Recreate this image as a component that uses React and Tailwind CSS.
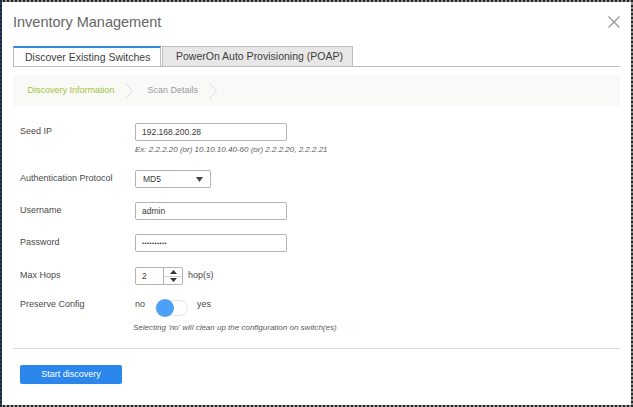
import React from 'react';

const FONT = { fontFamily: '"Liberation Sans", Arial, sans-serif' };

function Chevron() {
  return (
    <svg width="8" height="16" viewBox="0 0 8 16" className="shrink-0">
      <path d="M0.5 0.5 L7.5 8 L0.5 15.5" fill="none" stroke="#dcdcdc" strokeWidth="1" />
    </svg>
  );
}

function Row({ label, className = '', children }) {
  return (
    <div className={`flex items-center h-[18px] pl-[7px] ${className}`}>
      <div className="w-[115px] text-[9px] text-[#4a4a4a]">{label}</div>
      {children}
    </div>
  );
}

function TextBox({ children }) {
  return (
    <div className="w-[152px] h-[18px] flex items-center px-[6px] border border-[#b3b3b3] rounded-[2px] bg-white text-[8.5px] text-[#3a3a3a]">
      {children}
    </div>
  );
}

export default function App() {
  return (
    <div className="w-[633px] h-[407px] bg-[linear-gradient(to_right,#1d3f7a_2px,#8f8f8f_2px)]" style={FONT}>
      <div className="w-full h-full border-2 border-dotted border-[#262626] bg-white bg-clip-padding px-[11px]">
        {/* header */}
        <div className="flex justify-between items-start pt-[12px]">
          <div className="text-[14.5px] leading-[17px] text-[#666]">Inventory Management</div>
          <svg width="12" height="12" viewBox="0 0 12 12" className="mt-[2px]">
            <path d="M0.5 0.5 L11.5 11.5 M11.5 0.5 L0.5 11.5" stroke="#9a9a9a" strokeWidth="1.4" />
          </svg>
        </div>

        {/* tabs */}
        <div className="flex mt-[15px] border-b border-[#bdbdbd] h-[21px]">
          <div className="w-[148px] h-[20px] border-t-2 border-t-[#2f8ae0] border-x border-x-[#bdbdbd] bg-white pl-[11px] text-[10.5px] leading-[18px] text-[#3d3d3d]">
            Discover Existing Switches
          </div>
          <div className="ml-[1px] w-[191px] h-[20px] border-t border-x border-[#bdbdbd] bg-[#e7e7e7] pl-[13px] text-[10.5px] leading-[19px] text-[#3d3d3d]">
            PowerOn Auto Provisioning (POAP)
          </div>
        </div>

        {/* breadcrumb */}
        <div className="mt-[8px] h-[31px] bg-[#f9f9f8] flex items-center pl-[14.5px] text-[9px]">
          <span className="text-[#a3c43c]">Discovery Information</span>
          <span className="ml-[10px] mr-[15px] flex"><Chevron /></span>
          <span className="text-[#999]">Scan Details</span>
          <span className="ml-[11px] flex"><Chevron /></span>
        </div>

        {/* form */}
        <Row label="Seed IP" className="mt-[17px]">
          <TextBox>192.168.200.28</TextBox>
        </Row>
        <div className="mt-[4px] ml-[122px] h-[10px] leading-[10px] text-[8px] italic text-[#5a5a5a]">
          Ex: 2.2.2.20 (or) 10.10.10.40-60 (or) 2.2.2.20, 2.2.2.21
        </div>

        <Row label="Authentication Protocol" className="mt-[15px]">
          <div className="w-[76px] h-[18px] flex items-center justify-between pl-[7px] pr-[7px] border border-[#b3b3b3] rounded-[2px] text-[8.5px] text-[#3a3a3a]">
            <span>MD5</span>
            <svg width="7" height="5" viewBox="0 0 7 5">
              <path d="M0 0 H7 L3.5 5 Z" fill="#444" />
            </svg>
          </div>
        </Row>

        <Row label="Username" className="mt-[14px]">
          <TextBox>admin</TextBox>
        </Row>

        <Row label="Password" className="mt-[14px]">
          <TextBox>
            <span className="text-[6px] tracking-[0.4px] text-[#333]">••••••••••</span>
          </TextBox>
        </Row>

        <Row label="Max Hops" className="mt-[15px]">
          <div className="w-[48px] h-[18px] flex border border-[#b3b3b3] rounded-[2px]">
            <div className="w-[27px] flex items-center pl-[6px] text-[8.5px] text-[#3a3a3a]">2</div>
            <div className="flex-1 flex flex-col border-l border-[#b3b3b3]">
              <div className="flex-1 flex items-center justify-center border-b border-[#cfcfcf]">
                <svg width="7" height="4" viewBox="0 0 7 4"><path d="M0 4 H7 L3.5 0 Z" fill="#333" /></svg>
              </div>
              <div className="flex-1 flex items-center justify-center">
                <svg width="7" height="4" viewBox="0 0 7 4"><path d="M0 0 H7 L3.5 4 Z" fill="#333" /></svg>
              </div>
            </div>
          </div>
          <span className="ml-[5px] text-[9px] text-[#4a4a4a]">hop(s)</span>
        </Row>

        <Row label="Preserve Config" className="mt-[11px]">
          <span className="text-[9px] text-[#4a4a4a]">no</span>
          <div className="relative ml-[10px] w-[33px] h-[16px] rounded-full border border-[#e6e6e6] bg-white translate-y-[3px]">
            <div className="absolute left-0 top-[-2px] w-[18px] h-[18px] rounded-full bg-[#4ca0f7]" />
          </div>
          <span className="ml-[9px] text-[9px] text-[#4a4a4a]">yes</span>
        </Row>
        <div className="mt-[9px] ml-[120px] h-[10px] leading-[10px] text-[8px] italic text-[#5a5a5a]">
          Selecting 'no' will clean up the configuration on switch(es)
        </div>

        <div className="mt-[15px] h-px bg-[#dcdcdc]" />

        <div className="mt-[16px] pl-[7px]">
          <button className="w-[102px] h-[19px] rounded-[2px] bg-[#2b87ec] text-white text-[9px] flex items-center justify-center">
            Start discovery
          </button>
        </div>
      </div>
    </div>
  );
}
